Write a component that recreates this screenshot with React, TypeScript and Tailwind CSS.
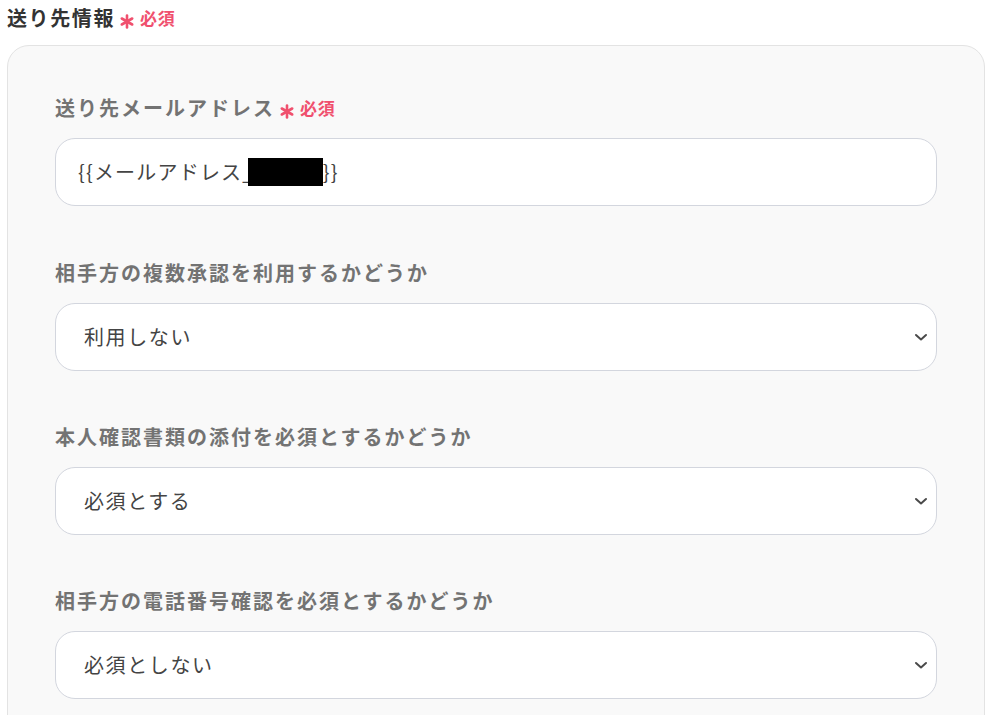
import React from "react";

const font = { fontFamily: '"Noto Sans CJK JP", "Noto Sans", sans-serif' };

function Star() {
  return (
    <svg width="14" height="15" viewBox="0 0 14 15" className="relative top-[3px]">
      <g stroke="currentColor" strokeWidth="2.6" strokeLinecap="round">
        <line x1="7" y1="1.5" x2="7" y2="13.5" />
        <line x1="1.8" y1="4.5" x2="12.2" y2="10.5" />
        <line x1="1.8" y1="10.5" x2="12.2" y2="4.5" />
      </g>
    </svg>
  );
}

function Required() {
  return (
    <span className="ml-[5px] inline-flex items-center text-[#f0506e]">
      <Star />
      <span className="ml-[6px] text-[17px] font-bold tracking-[0.04em]">必須</span>
    </span>
  );
}

function Chevron() {
  return (
    <svg width="16" height="16" viewBox="0 0 16 16" className="text-[#4a4a4a]">
      <path d="M3 6 L8 10.5 L13 6" fill="none" stroke="currentColor" strokeWidth="2" strokeLinecap="round" strokeLinejoin="round" />
    </svg>
  );
}

function Label({ children, required }: { children: React.ReactNode; required?: boolean }) {
  return (
    <div className="flex items-center h-[30px] text-[20px] font-bold tracking-[0.1em] text-[#737373]">
      {children}
      {required && <Required />}
    </div>
  );
}

function SelectBox({ value }: { value: string }) {
  return (
    <div className="mt-[15px] flex h-[68px] items-center justify-between rounded-[20px] border border-[#d3d6de] bg-white pl-[28px] pr-[7px]">
      <span className="text-[20px] tracking-[0.08em] text-[#444]">{value}</span>
      <Chevron />
    </div>
  );
}

export default function App() {
  return (
    <div className="h-[715px] w-[994px] overflow-hidden bg-white" style={font}>
      <div className="pl-[7px] pt-[3px]">
        <div className="flex items-center h-[30px] text-[20px] font-bold tracking-[0.08em] text-[#333]">
          送り先情報
          <Required />
        </div>
      </div>
      <div className="ml-[7px] mt-[12px] w-[978px] rounded-t-[22px] border border-[#e3e3e3] bg-[#f9f9f9] px-[47px] pt-[47px] pb-[40px]">
        <Label required>送り先メールアドレス</Label>
        <div className="mt-[15px] flex h-[68px] items-center rounded-[20px] border border-[#d3d6de] bg-white pl-[22px]">
          <span className="text-[20px] tracking-[0.06em] text-[#444] flex items-center">
            {"{{メールアドレス_"}
            <span className="inline-block h-[28px] w-[75px] bg-black -ml-[7px]" />
            {"}}"}
          </span>
        </div>
        <div className="mt-[52px]">
          <Label>相手方の複数承認を利用するかどうか</Label>
          <SelectBox value="利用しない" />
        </div>
        <div className="mt-[51px]">
          <Label>本人確認書類の添付を必須とするかどうか</Label>
          <SelectBox value="必須とする" />
        </div>
        <div className="mt-[51px]">
          <Label>相手方の電話番号確認を必須とするかどうか</Label>
          <SelectBox value="必須としない" />
        </div>
      </div>
    </div>
  );
}
